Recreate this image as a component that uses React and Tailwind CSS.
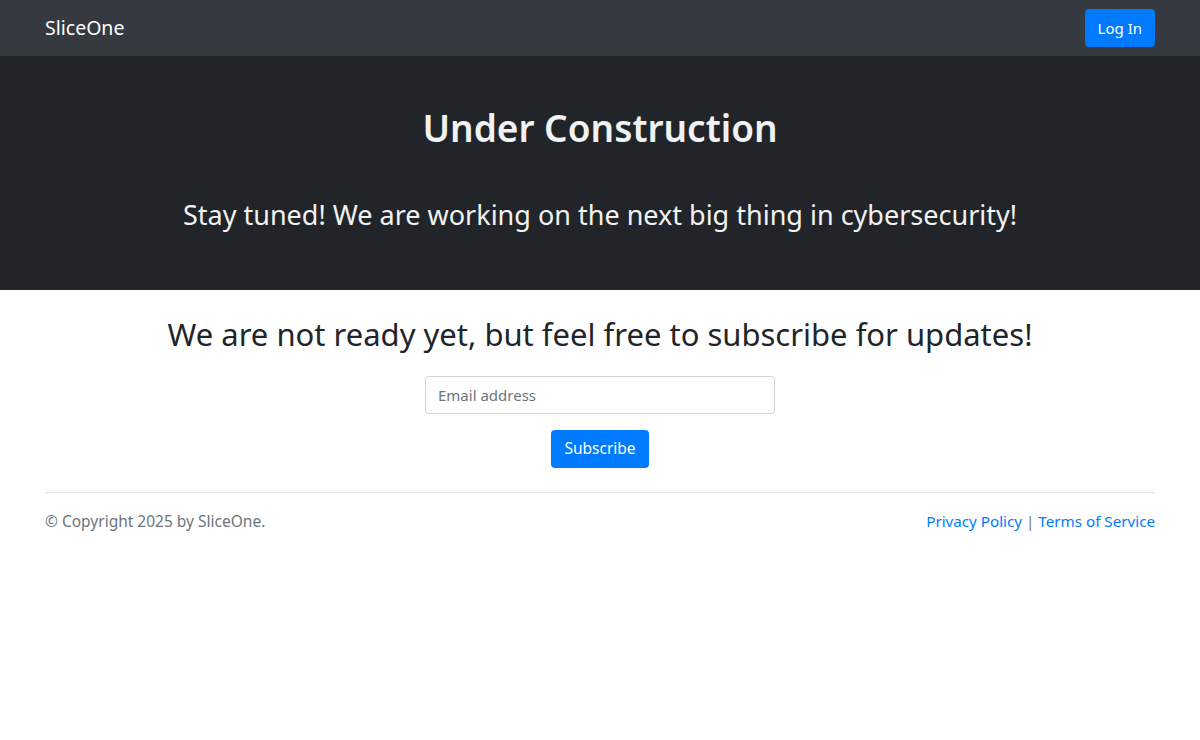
import React from 'react';

const font = { fontFamily: '"Noto Sans", "Open Sans", sans-serif' };

export default function App() {
  return (
    <div className="min-h-[740px] bg-white text-[#212529]" style={font}>
      {/* Navbar */}
      <nav className="h-14 bg-[#343a40]">
        <div className="mx-auto flex h-full w-[1110px] items-center justify-between">
          <a className="text-[19.5px] text-white">SliceOne</a>
          <button className="h-[38px] rounded-[4px] bg-[#007bff] px-[13px] text-[15px] text-white">Log In</button>
        </div>
      </nav>

      {/* Hero */}
      <header className="flex h-[234px] flex-col items-center bg-[#212529] text-[#f1f2f3]">
        <h1 className="mt-[45px] text-[37px] font-semibold leading-[54px]">Under Construction</h1>
        <p className="mt-[44px] text-[27px] leading-[32px]">Stay tuned! We are working on the next big thing in cybersecurity!</p>
      </header>

      {/* Subscribe */}
      <section className="mx-auto flex w-[1110px] flex-col items-center">
        <h2 className="mt-[24px] text-[31px] leading-[40px]">We are not ready yet, but feel free to subscribe for updates!</h2>
        <input
          type="email"
          placeholder="Email address"
          className="mt-[22px] h-[38px] w-[350px] rounded-[4px] border border-[#ced4da] px-3 text-[15px] placeholder:text-[#6c757d]"
        />
        <button className="mt-4 h-[38px] rounded-[4px] bg-[#007bff] px-[13px] text-[15.5px] text-white">Subscribe</button>
      </section>

      {/* Footer */}
      <footer className="mx-auto mt-6 w-[1110px] border-t border-[#dee2e6] pt-[17px]">
        <div className="flex items-center justify-between text-[15.5px] text-[#6c757d]">
          <span>© Copyright 2025 by SliceOne.</span>
          <span className="text-[15.2px]">
            <a className="text-[#007bff]">Privacy Policy</a> | <a className="text-[#007bff]">Terms of Service</a>
          </span>
        </div>
      </footer>
    </div>
  );
}
